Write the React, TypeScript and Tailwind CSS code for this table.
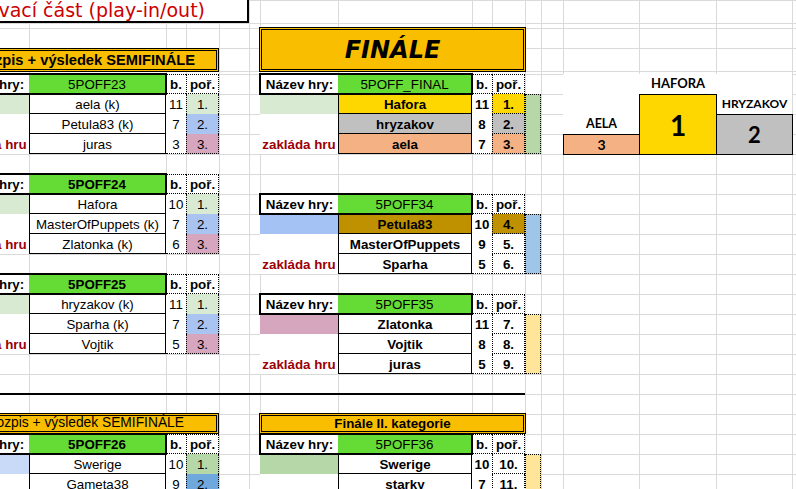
import React from 'react';

// ==============
// Sheet geometry (column widths / row heights of the spreadsheet)
// ==============
const COLS = 'grid-cols-[78px_137px_20px_33px_30px_11px_78px_134px_20px_33px_16px_22px_76px_77px_76px_60px]';
const ROWS = 'grid-rows-[23px_5px_20px_23px_3px_repeat(22,20px)]';

type Row = {
  name: string;
  score: string;
  rank: string;
  label?: string;
  labelBg?: string;
  nameBg?: string;
  rankBg?: string;
};

type TableProps = {
  place: string;
  game: string;
  gameBold?: boolean;
  rows: Row[];
  right?: boolean;
  barBg?: string;
};

const Table = ({ place, game, gameBold = false, rows, right = false, barBg = '' }: TableProps) => {
  const cols = right ? 'grid-cols-[78px_134px_20px_33px_16px]' : 'grid-cols-[78px_137px_20px_33px]';
  const weight = right ? 'font-bold' : 'font-normal';

  return (
    <div className={`${place} grid ${cols} auto-rows-[20px]`}>
      {/* ====== Header: game name ====== */}
      <div className="relative z-10 col-span-2 -m-px flex border-2 border-black">
        <div className="flex w-[77px] items-center justify-center bg-white pt-px font-bold whitespace-nowrap">Název hry:</div>
        <div className={`flex flex-1 items-center justify-center bg-[#64dc35] pt-px ${gameBold ? 'font-bold' : ''}`}>{game}</div>
      </div>
      <div className="flex items-center justify-center border-y border-dotted border-black bg-white pt-[2px] font-bold">b.</div>
      <div className="flex items-center justify-center border border-dotted border-black bg-white pt-[2px] font-bold">poř.</div>
      {right && <div />}

      {/* ====== Players ====== */}
      {rows.map((r, i) => {
        const last = i === rows.length - 1;
        return (
          <React.Fragment key={i}>
            <div className={`flex items-center justify-center pt-[2px] font-bold whitespace-nowrap text-[#9c0006] ${r.labelBg ?? 'bg-white'}`}>
              {r.label}
            </div>
            <div className={`flex items-center justify-center border-x border-b border-black pt-[2px] whitespace-nowrap ${weight} ${r.nameBg ?? 'bg-white'}`}>
              {r.name}
            </div>
            <div className={`flex items-center justify-center bg-white pt-[2px] ${weight} ${last ? 'border-b border-dotted border-black' : ''}`}>
              {r.score}
            </div>
            <div className={`flex items-center justify-center border-x border-dotted border-black pt-[2px] ${weight} ${right || last ? 'border-b' : ''} ${r.rankBg ?? 'bg-white'}`}>
              {r.rank}
            </div>
            {right && i === 0 && <div className={`row-span-3 border border-dotted border-black ${barBg}`} />}
          </React.Fragment>
        );
      })}
    </div>
  );
};

export default function App() {
  return (
    <div className="h-[489px] w-[796px] overflow-hidden bg-white font-['Liberation_Sans',Arial,sans-serif] text-[13.33px] text-black">
      <div className="relative -ml-[49px] w-[901px]">
        {/* ====== Gridlines ====== */}
        <div className={`grid ${COLS} ${ROWS}`}>
          {Array.from({ length: 16 * 27 }).map((_, i) => (
            <div key={i} className="border-l border-t border-[#dadada]" />
          ))}
        </div>

        {/* ====== Sheet content ====== */}
        <div className={`absolute inset-0 grid ${COLS} ${ROWS}`}>
          {/* Title */}
          <div className="col-span-5 col-start-1 row-start-1 flex items-center justify-end whitespace-nowrap border-b-2 border-r-2 border-black bg-white pr-[42px] font-['DejaVu_Sans',sans-serif] text-[19px] leading-[19px] text-[#cc0000]">
            Vyřazovací část (play-in/out)
          </div>

          {/* Semifinal header */}
          <div className="col-span-4 col-start-1 row-span-2 row-start-4 mb-[2px] flex items-center justify-end whitespace-nowrap border-[3px] border-double border-black bg-[#f9be00] pr-[21px] text-[14.67px] font-bold">
            Rozpis + výsledek SEMIFINÁLE
          </div>

          {/* Final header */}
          <div className="col-span-4 col-start-7 row-span-3 row-start-3 -mx-px -mt-px mb-[2px] flex items-center justify-center border-[3px] border-double border-black bg-[#f9be00] font-['DejaVu_Sans',sans-serif] text-[24px] font-bold italic">
            FINÁLE
          </div>

          {/* Semifinal tables */}
          <Table
            place="col-start-1 col-span-4 row-start-6 row-span-4"
            game="5POFF23"
            rows={[
              { name: 'aela (k)', score: '11', rank: '1.', labelBg: 'bg-[#d9ead3]', rankBg: 'bg-[#d9ead3]' },
              { name: 'Petula83 (k)', score: '7', rank: '2.', rankBg: 'bg-[#a9c4f0]' },
              { name: 'juras', score: '3', rank: '3.', label: 'zakláda hru', rankBg: 'bg-[#d5a6bd]' },
            ]}
          />
          <Table
            place="col-start-1 col-span-4 row-start-11 row-span-4"
            game="5POFF24"
            gameBold
            rows={[
              { name: 'Hafora', score: '10', rank: '1.', labelBg: 'bg-[#d9ead3]', rankBg: 'bg-[#d9ead3]' },
              { name: 'MasterOfPuppets (k)', score: '7', rank: '2.', rankBg: 'bg-[#a9c4f0]' },
              { name: 'Zlatonka (k)', score: '6', rank: '3.', label: 'zakláda hru', rankBg: 'bg-[#d5a6bd]' },
            ]}
          />
          <Table
            place="col-start-1 col-span-4 row-start-16 row-span-4"
            game="5POFF25"
            gameBold
            rows={[
              { name: 'hryzakov (k)', score: '11', rank: '1.', labelBg: 'bg-[#d9ead3]', rankBg: 'bg-[#d9ead3]' },
              { name: 'Sparha (k)', score: '7', rank: '2.', rankBg: 'bg-[#a9c4f0]' },
              { name: 'Vojtik', score: '5', rank: '3.', label: 'zakláda hru', rankBg: 'bg-[#d5a6bd]' },
            ]}
          />

          {/* Final tables */}
          <Table
            place="col-start-7 col-span-5 row-start-6 row-span-4"
            game="5POFF_FINAL"
            right
            barBg="bg-[#b6d7a8]"
            rows={[
              { name: 'Hafora', score: '11', rank: '1.', labelBg: 'bg-[#d9ead3]', nameBg: 'bg-[#ffd700]', rankBg: 'bg-[#ffd700]' },
              { name: 'hryzakov', score: '8', rank: '2.', nameBg: 'bg-[#c0c0c0]', rankBg: 'bg-[#c0c0c0]' },
              { name: 'aela', score: '7', rank: '3.', label: 'zakláda hru', nameBg: 'bg-[#f4b183]', rankBg: 'bg-[#f4b183]' },
            ]}
          />
          <Table
            place="col-start-7 col-span-5 row-start-12 row-span-4"
            game="5POFF34"
            right
            barBg="bg-[#9fc5e8]"
            rows={[
              { name: 'Petula83', score: '10', rank: '4.', labelBg: 'bg-[#a4c2f4]', nameBg: 'bg-[#bf9000]', rankBg: 'bg-[#bf9000]' },
              { name: 'MasterOfPuppets', score: '9', rank: '5.' },
              { name: 'Sparha', score: '5', rank: '6.', label: 'zakláda hru' },
            ]}
          />
          <Table
            place="col-start-7 col-span-5 row-start-17 row-span-4"
            game="5POFF35"
            right
            barBg="bg-[#ffe599]"
            rows={[
              { name: 'Zlatonka', score: '11', rank: '7.', labelBg: 'bg-[#d5a6bd]' },
              { name: 'Vojtik', score: '8', rank: '8.' },
              { name: 'juras', score: '5', rank: '9.', label: 'zakláda hru' },
            ]}
          />

          {/* Podium */}
          <div className="col-span-3 col-start-13 row-span-4 row-start-6 -mb-px flex items-end bg-white font-['Lato',sans-serif] font-bold">
            <div className="flex w-[77px] shrink-0 flex-col">
              <div className="flex h-5 items-center justify-center text-[12.5px]">AELA</div>
              <div className="flex h-[21px] items-center justify-center border border-black bg-[#f4b183] text-[14px]">3</div>
            </div>
            <div className="-ml-px flex w-[78px] shrink-0 flex-col">
              <div className="flex h-5 items-center justify-center text-[13px]">HAFORA</div>
              <div className="flex h-[61px] items-center justify-center border border-black bg-[#ffd700] text-[28px]">1</div>
            </div>
            <div className="-ml-px flex w-[77px] shrink-0 flex-col">
              <div className="flex h-5 items-center justify-center text-[12px]">HRYZAKOV</div>
              <div className="flex h-[41px] items-center justify-center border border-black bg-[#c0c0c0] text-[22px]">2</div>
            </div>
          </div>

          {/* Separator */}
          <div className="col-span-10 col-start-1 row-start-22 -mt-px border-t-2 border-black" />

          {/* Second category */}
          <div className="col-span-4 col-start-1 row-start-23 -mt-px flex items-center justify-end whitespace-nowrap border-[3px] border-double border-black bg-[#f9be00] pr-[32px] text-[13.8px]">
            Rozpis + výsledek SEMIFINÁLE
          </div>
          <div className="col-span-4 col-start-7 row-start-23 -mx-px -mt-px flex items-center justify-center border-[3px] border-double border-black bg-[#f9be00] font-bold">
            Finále II. kategorie
          </div>
          <Table
            place="col-start-1 col-span-4 row-start-24 row-span-4"
            game="5POFF26"
            gameBold
            rows={[
              { name: 'Swerige', score: '10', rank: '1.', labelBg: 'bg-[#c9daf8]', rankBg: 'bg-[#b6d7a8]' },
              { name: 'Gameta38', score: '9', rank: '2.', rankBg: 'bg-[#6fa8dc]' },
              { name: '', score: '', rank: '3.', label: 'zakláda hru', rankBg: 'bg-[#d5a6bd]' },
            ]}
          />
          <Table
            place="col-start-7 col-span-5 row-start-24 row-span-4"
            game="5POFF36"
            right
            barBg="bg-[#ffe599]"
            rows={[
              { name: 'Swerige', score: '10', rank: '10.', labelBg: 'bg-[#b6d7a8]' },
              { name: 'starky', score: '7', rank: '11.' },
              { name: '', score: '', rank: '12.', label: 'zakláda hru' },
            ]}
          />
        </div>
      </div>
    </div>
  );
}
